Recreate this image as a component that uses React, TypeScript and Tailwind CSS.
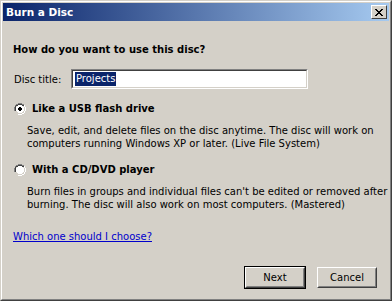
import React from "react";

const font = { fontFamily: '"DejaVu Sans", Verdana, sans-serif' };

function Radio({ checked }: { checked: boolean }) {
  return (
    <svg width="12" height="12" viewBox="0 0 12 12" className="shrink-0">
      <path d="M4 0h4v1h2v1h-2v-0h0v0H4v1H2v1H1v4H0V4h1V2h1V1h2z" fill="#808080" />
      <path d="M10 2h1v2h1v4h-1v2h-1v1H8v1H4v-1h4v-1h2V8h1V4h-1z" fill="#ffffff" />
      <path d="M4 1h4v1h2v0H4v0H2v1H1v0z" fill="#808080" />
      <path d="M4 1h4v1H4zM2 2h2v1H2zM8 2h2v1H8zM1 3h1v1H1zM1 4h1v4H1z" fill="#404040" />
      <path d="M10 4h1v4h-1zM9 8h1v1H9zM8 9h2v1H8zM4 10h4v-1H4z" fill="#d4d0c8" />
      <path d="M4 2h4v1h1v1h1v4H9v1H8v1H4V9H3V8H2V4h1V3h1z" fill="#ffffff" />
      {checked && <path d="M5 4h2v1h1v2H7v1H5V7H4V5h1z" fill="#000000" />}
    </svg>
  );
}

function Button({ label, isDefault }: { label: string; isDefault?: boolean }) {
  return (
    <div className={isDefault ? "border border-black" : "border border-transparent"}>
      <div className="border border-t-white border-l-white border-r-[#404040] border-b-[#404040]">
        <div className="h-[19px] w-[58px] border border-t-[#d4d0c8] border-l-[#d4d0c8] border-r-[#808080] border-b-[#808080] flex items-center justify-center text-[10px] text-black">
          {label}
        </div>
      </div>
    </div>
  );
}

export default function App() {
  return (
    <div className="w-[392px] h-[301px] overflow-hidden bg-[#d4d0c8] border border-t-[#d4d0c8] border-l-[#d4d0c8] border-r-[#404040] border-b-[#404040]" style={font}>
      <div className="h-full border border-t-white border-l-white border-r-[#808080] border-b-[#808080] p-px flex flex-col">
        <div className="h-[18px] shrink-0 flex items-center justify-between bg-[linear-gradient(to_right,#0a246a,#a6caf0)] pl-[3px] pr-[2px]">
          <span className="text-white font-bold text-[10.5px] leading-none">Burn a Disc</span>
          <div className="w-[16px] h-[14px] bg-[#d4d0c8] border border-t-white border-l-white border-r-[#404040] border-b-[#404040] flex items-center justify-center">
            <svg width="8" height="7" viewBox="0 0 8 7">
              <path d="M0 0h2v1h1v1h2V1h1V0h2v1H7v1H6v1H5v1h1v1h1v1h1v1H6V6H5V5H3v1H2v1H0V6h1V5h1V4h1V3H2V2H1V1H0z" fill="#000" />
            </svg>
          </div>
        </div>

        <div className="flex-1 flex flex-col px-[10px] text-[10px] leading-[13px] text-black whitespace-nowrap">
          <div className="mt-[22px] font-bold">How do you want to use this disc?</div>

          <div className="mt-[13px] flex items-center">
            <span className="w-[58px] pl-px">Disc title:</span>
            <div className="w-[237px] h-[20px] border border-t-[#808080] border-l-[#808080] border-r-white border-b-white">
              <div className="h-full border border-t-[#404040] border-l-[#404040] border-r-[#d4d0c8] border-b-[#d4d0c8] bg-white flex items-center pl-[2px]">
                <span className="bg-[#0a246a] text-white px-px leading-[14px]">Projects</span>
              </div>
            </div>
          </div>

          <div className="mt-[13px] flex items-center gap-[6px] pl-px">
            <Radio checked />
            <span className="font-bold">Like a USB flash drive</span>
          </div>
          <div className="mt-[9px] pl-[14px]">
            Save, edit, and delete files on the disc anytime. The disc will work on
            <br />
            computers running Windows XP or later. (Live File System)
          </div>

          <div className="mt-[13px] flex items-center gap-[6px] pl-px">
            <Radio checked={false} />
            <span className="font-bold">With a CD/DVD player</span>
          </div>
          <div className="mt-[9px] pl-[14px]">
            Burn files in groups and individual files can't be edited or removed after
            <br />
            burning. The disc will also work on most computers. (Mastered)
          </div>

          <div className="mt-[19px]">
            <span className="text-[#0000cc] underline">Which one should I choose?</span>
          </div>

          <div className="mt-[23px] flex justify-end gap-[10px] pr-px">
            <Button label="Next" isDefault />
            <Button label="Cancel" />
          </div>
        </div>
      </div>
    </div>
  );
}
